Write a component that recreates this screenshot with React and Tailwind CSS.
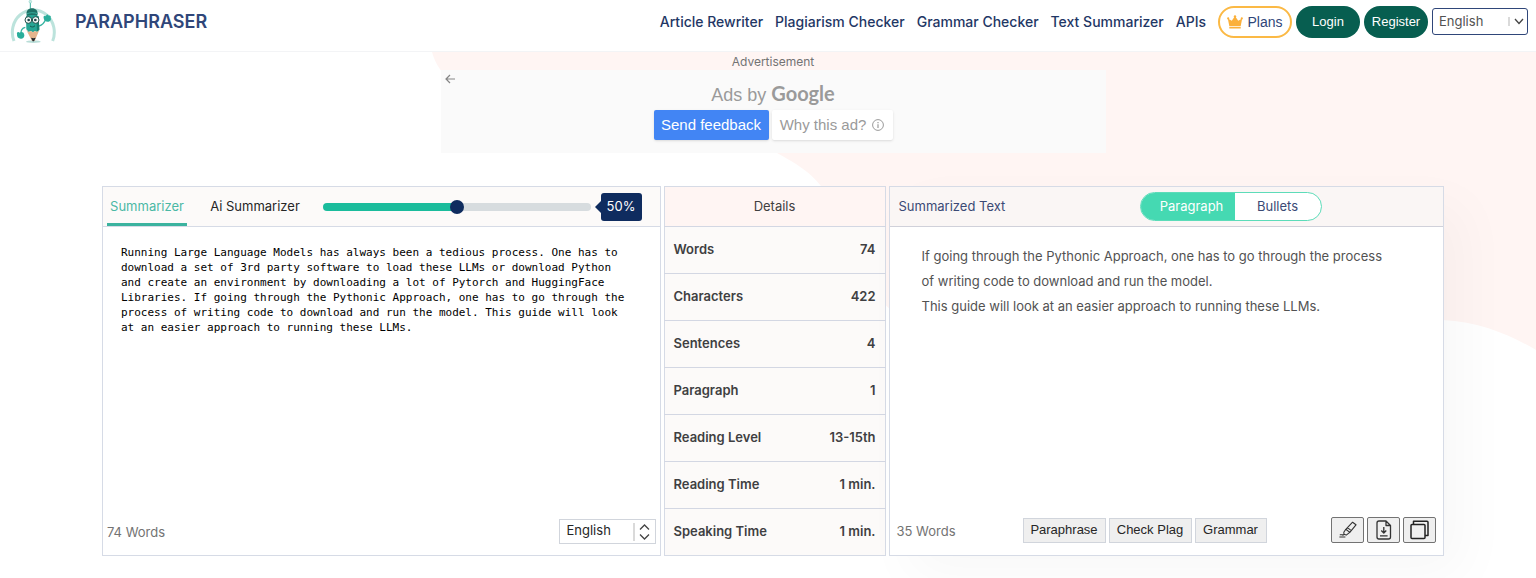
import React, { useState } from 'react';

const NAV_LINKS = ['Article Rewriter', 'Plagiarism Checker', 'Grammar Checker', 'Text Summarizer', 'APIs'];

const DETAILS = [
  { label: 'Words', value: '74' },
  { label: 'Characters', value: '422' },
  { label: 'Sentences', value: '4' },
  { label: 'Paragraph', value: '1' },
  { label: 'Reading Level', value: '13-15th' },
  { label: 'Reading Time', value: '1 min.' },
  { label: 'Speaking Time', value: '1 min.' },
];

const INPUT_TEXT =
  'Running Large Language Models has always been a tedious process. One has to download a set of 3rd party software to load these LLMs or download Python and create an environment by downloading a lot of Pytorch and HuggingFace Libraries. If going through the Pythonic Approach, one has to go through the process of writing code to download and run the model. This guide will look at an easier approach to running these LLMs.';

const SUMMARY = [
  'If going through the Pythonic Approach, one has to go through the process of writing code to download and run the model.',
  'This guide will look at an easier approach to running these LLMs.',
];

const Mascot = () => (
  <svg width="47" height="45" viewBox="30 3 141 135" fill="none" aria-hidden="true">
    <path d="M42 129C32 104 37 70 60 51c24-20 57-20 80 0 23 19 28 53 18 78" stroke="#bce3dc" strokeWidth="9" />
    <ellipse cx="100" cy="131" rx="22" ry="4" fill="#b9ddd7" />
    <path d="M91 12v20" stroke="#3fb5a4" strokeWidth="3" />
    <circle cx="91" cy="11" r="4" fill="#d3efea" stroke="#7accbf" strokeWidth="1.5" />
    <path d="M76 88c-10 2-14 9-13 20M117 84c10-2 16-9 20-20" stroke="#36b3a1" strokeWidth="4" />
    <path d="M51 108c-2-6 5-8 8-4 4-4 13-2 13 4 3 6-1 14-8 14-8 1-14-5-13-14z" fill="#2aae9b" />
    <path d="M131 60c-2-6 4-9 7-5 0-6 7-7 8-2 5-2 8 3 6 6 3 6-2 12-9 12-6 0-12-4-12-11z" fill="#2aae9b" />
    <path d="M80 49c-2-10 5-18 16-18s18 7 17 17l-3 10H80z" fill="#1f7166" />
    <path d="M80 48c8-5 23-5 33-1" stroke="#39ae9d" strokeWidth="3" />
    <path d="M78 55c10-5 29-5 38 0l2 40-7 7-6-3-6 4-7-4-6 3-7-8z" fill="#26a594" />
    <path d="M109 54l7 2 2 40-7 5z" fill="#178071" />
    <path d="M79 96l7 7 6-4 7 4 6-4 6 3 7-6-14 33h-8z" fill="#e5b48d" />
    <path d="M93 119l7 2 7-2-5 11h-4z" fill="#24292f" />
    <circle cx="85" cy="66" r="10" fill="#f4faf8" stroke="#28534f" strokeWidth="3" />
    <circle cx="107" cy="66" r="10" fill="#f4faf8" stroke="#28534f" strokeWidth="3" />
    <circle cx="86" cy="66" r="4" fill="#20464a" />
    <circle cx="106" cy="66" r="4" fill="#20464a" />
    <path d="M90 84c5 4 11 4 15-1" stroke="#13564d" strokeWidth="3" />
  </svg>
);

const CrownIcon = () => (
  <svg width="16" height="14" viewBox="0 0 16 14" fill="#fbb03b" aria-hidden="true">
    <circle cx="8" cy="1.4" r="1.2" />
    <circle cx="1.2" cy="3.4" r="1.1" />
    <circle cx="14.8" cy="3.4" r="1.1" />
    <path d="M.8 3.500l4 2.300L8 1l3.200 4.800 4-2.300-1.500 7.400H2.300zM2.300 11.800h11.400v1.700H2.300z" />
  </svg>
);

const HighlighterIcon = () => (
  <svg width="18" height="18" viewBox="0 0 18 18" fill="none" stroke="#333" strokeWidth="1.1" strokeLinejoin="round" aria-hidden="true">
    <path d="M13.6 1.2l3.4 2.6-6.2 7.6-4-3.1zM6.8 8.3l-2 3 .2 2 2.2.8 3.6-2.7M8.4 6.6l3.9 3M4.9 13.3l-1.4 1.2M.8 13.8h4.4M.4 16h6" />
  </svg>
);

const DownloadIcon = () => (
  <svg width="16" height="20" viewBox="0 0 16 20" fill="none" stroke="#333" strokeWidth="1.3" strokeLinejoin="round" aria-hidden="true">
    <path d="M10 1H3a2 2 0 0 0-2 2v14a2 2 0 0 0 2 2h9.500a2 2 0 0 0 2-2V5.500zM10 1v4.500h4.500M7.800 7v6M5.300 10.500l2.500 2.500 2.500-2.500M4 15.800h7.600" />
  </svg>
);

const CopyIcon = () => (
  <svg width="19" height="20" viewBox="0 0 19 20" fill="none" stroke="#222" strokeWidth="1.5" strokeLinejoin="round" aria-hidden="true">
    <rect x="1" y="4.500" width="14" height="14" rx="1" />
    <path d="M3.500 4.300V1.200H17a1 1 0 0 1 1 1v13.300h-3" />
  </svg>
);

const Backdrop = () => (
  <svg className="absolute top-0 right-0 -z-10" width="1104" height="300" viewBox="0 0 1104 300" aria-hidden="true">
    <path
      d="M0 0C8 30 40 52 120 62C210 72 290 74 345 101C375 117 390 130 398 150C420 190 430 260 500 280C620 300 850 262 1010 268C1050 270 1080 284 1104 298V0Z"
      fill="#fff5f3"
    />
  </svg>
);

const Header = () => (
  <header className="flex h-[52px] items-center justify-between border-b border-gray-100 bg-white pr-2 pb-2 pl-[10px]">
    <a href="#" className="flex items-center gap-[18px] text-lg font-semibold text-[#2f4679]">
      <Mascot />
      PARAPHRASER
    </a>
    <div className="flex items-center gap-3">
      <nav className="flex items-center gap-3 text-sm font-medium text-[#1f3765]">
        {NAV_LINKS.map((link) => (
          <a key={link} href="#" className="whitespace-nowrap">{link}</a>
        ))}
      </nav>
      <div className="flex items-center gap-1 font-['Liberation_Sans',sans-serif] text-[13px]">
        <button className="flex h-8 w-[74px] items-center justify-center gap-1 rounded-full border-2 border-[#fbb945] text-sm text-[#2f4679]">
          <CrownIcon />
          Plans
        </button>
        <button className="h-8 w-16 rounded-full bg-[#075e50] text-white">Login</button>
        <button className="h-8 w-16 rounded-full bg-[#075e50] text-white">Register</button>
        <div className="relative">
          <select
            aria-label="Site language"
            className="h-[27px] w-24 appearance-none rounded-[3px] border border-[#2f4679] bg-white px-[6px] font-['Inter',sans-serif] text-[13px] text-neutral-600"
          >
            <option>English</option>
          </select>
          <svg className="pointer-events-none absolute top-2 right-1" width="16" height="11" viewBox="0 0 16 11" fill="none" aria-hidden="true">
            <path d="M1 1v9" stroke="#b5b5b5" />
            <path d="M7 3l4 4.500L15 3" stroke="#444" strokeWidth="1.300" />
          </svg>
        </div>
      </div>
    </div>
  </header>
);

const AdSlot = () => (
  <section className="flex flex-col items-center pt-[2px]">
    <p className="h-4 text-xs leading-4 text-neutral-500">Advertisement</p>
    <div className="flex h-[83px] w-full max-w-[665px] items-start bg-[#fafafa] font-['Liberation_Sans',sans-serif] text-[#9a9a9a]">
      <button aria-label="Back" className="w-5 p-1">
        <svg width="10" height="10" viewBox="0 0 10 10" fill="none" stroke="#858585" strokeWidth="1.200" aria-hidden="true">
          <path d="M10 5H1M5 1L1 5l4 4" />
        </svg>
      </button>
      <div className="flex flex-1 flex-col items-center gap-[3px] pt-[11px] pr-5">
        <p className="text-lg leading-6">
          Ads by <span className="font-['Lato',sans-serif] text-xl leading-6 font-bold">Google</span>
        </p>
        <div className="flex gap-[3px] text-[15px]">
          <button className="h-[30px] w-[115px] rounded-[2px] bg-[#4285f4] text-white shadow">Send feedback</button>
          <button className="flex h-[30px] w-[121px] items-center justify-center gap-[6px] rounded-[2px] bg-white shadow">
            Why this ad?
            <svg width="12" height="12" viewBox="0 0 12 12" fill="none" stroke="#9a9a9a" aria-hidden="true">
              <circle cx="6" cy="6" r="5.400" />
              <path d="M6 5.200V9M6 3v1.200" strokeWidth="1.200" />
            </svg>
          </button>
        </div>
      </div>
    </div>
  </section>
);

const InputPanel = () => {
  const [text, setText] = useState(INPUT_TEXT);
  const [length, setLength] = useState(50);

  return (
    <section className="flex min-w-0 flex-col border border-[#d6dbe6] bg-white">
      <div className="flex h-10 items-stretch border-b border-[#d6dbe6] bg-[#fcfaf9] pr-[18px] pl-1 text-[13px]">
        <button className="w-20 border-y-3 border-t-transparent border-b-[#3bb39f] text-[#4bb8a5]">Summarizer</button>
        <button className="ml-5 w-24 text-neutral-800">Ai Summarizer</button>
        <div className="ml-5 flex flex-1 items-center">
          <input
            type="range"
            aria-label="Summary length"
            min="0"
            max="100"
            value={length}
            onChange={(e) => setLength(Number(e.target.value))}
            className="h-2 min-w-0 flex-1 appearance-none rounded-full [&::-webkit-slider-thumb]:h-[14px] [&::-webkit-slider-thumb]:w-[14px] [&::-webkit-slider-thumb]:appearance-none [&::-webkit-slider-thumb]:rounded-full [&::-webkit-slider-thumb]:bg-[#0f2c5f]"
            style={{ background: `linear-gradient(to right, #1abc9c ${length}%, #d7dcdf ${length}%)` }}
          />
          <svg className="ml-1" width="6" height="12" viewBox="0 0 6 12" fill="#0f2c5f" aria-hidden="true">
            <path d="M6 0v12L0 6z" />
          </svg>
          <output className="flex h-7 w-[41px] items-center justify-center rounded-[3px] bg-[#0f2c5f] text-[13px] text-white">{length}%</output>
        </div>
      </div>
      <textarea
        aria-label="Text to summarize"
        value={text}
        onChange={(e) => setText(e.target.value)}
        className="flex-1 resize-none bg-transparent pt-[18px] pr-[30px] pl-[18px] font-['DejaVu_Sans_Mono',monospace] text-[11px] leading-[15px] text-black outline-none"
      />
      <div className="flex h-12 items-center justify-between px-1 text-[13px]">
        <span className="pt-1 text-neutral-500">74 Words</span>
        <div className="relative">
          <select
            aria-label="Text language"
            className="h-[25px] w-[97px] appearance-none border border-gray-300 bg-white px-[7px] text-[13px] text-neutral-800"
          >
            <option>English</option>
          </select>
          <svg className="pointer-events-none absolute top-1 right-1" width="19" height="18" viewBox="0 0 19 18" fill="none" aria-hidden="true">
            <path d="M1 0v18" stroke="#b5b5b5" />
            <path d="M7 6.500L11.500 2 16 6.500M7 11.500l4.500 4.500 4.500-4.500" stroke="#444" strokeWidth="1.300" />
          </svg>
        </div>
      </div>
    </section>
  );
};

const DetailsTable = () => (
  <table className="w-full border-collapse border border-[#d6dbe6] bg-[#fcfaf9] text-[13px]">
    <thead>
      <tr className="h-10 bg-[#fff5f3] text-neutral-700">
        <th colSpan="2" className="font-normal">Details</th>
      </tr>
    </thead>
    <tbody className="font-semibold text-[#3f3f42]">
      {DETAILS.map(({ label, value }) => (
        <tr key={label} className="h-[47px] border-t border-[#d3d7e3]">
          <th scope="row" className="pl-[9px] text-left font-semibold">{label}</th>
          <td className="pr-[9px] text-right">{value}</td>
        </tr>
      ))}
    </tbody>
  </table>
);

const OutputPanel = () => {
  const [mode, setMode] = useState('Paragraph');

  return (
    <section className="flex min-w-0 flex-col border border-[#d6dbe6] bg-white shadow-[20px_20px_50px_rgba(0,0,0,0.03)]">
      <div className="flex h-10 items-center border-b border-[#d0d1da] bg-[#faf6f5] px-[9px] text-[13px] text-[#3b4a75]">
        <h2 className="w-[241px]">Summarized Text</h2>
        <div className="flex h-[29px] w-[182px] overflow-hidden rounded-full border border-[#5ddcb9] bg-white">
          {['Paragraph', 'Bullets'].map((item) => (
            <button
              key={item}
              onClick={() => setMode(item)}
              className={`flex-1 ${mode === item ? 'bg-[#45d9b2] pl-2 text-white' : ''}`}
            >
              {item}
            </button>
          ))}
        </div>
      </div>
      <div className="flex-1 pt-[17px] pr-12 pl-8 text-[13px] leading-[25px] text-neutral-600">
        {SUMMARY.map((line) => (
          <p key={line}>{line}</p>
        ))}
      </div>
      <div className="flex h-[50px] items-center justify-between px-[7px]">
        <span className="w-[126px] pt-1 text-[13px] text-neutral-500">35 Words</span>
        <div className="flex flex-1 gap-[3px] font-['Liberation_Sans',sans-serif] text-[13px] text-neutral-800">
          <button className="h-[25px] w-[83px] border border-gray-300 bg-[#efefef]">Paraphrase</button>
          <button className="h-[25px] w-[83px] border border-gray-300 bg-[#efefef]">Check Plag</button>
          <button className="h-[25px] w-[72px] border border-gray-300 bg-[#efefef]">Grammar</button>
        </div>
        <div className="flex gap-[3px]">
          <button aria-label="Highlight" className="flex h-[26px] w-[33px] items-center justify-center rounded-[2px] border border-neutral-500 bg-[#efefef]">
            <HighlighterIcon />
          </button>
          <button aria-label="Download" className="flex h-[26px] w-[33px] items-center justify-center rounded-[2px] border border-neutral-500 bg-[#efefef]">
            <DownloadIcon />
          </button>
          <button aria-label="Copy" className="flex h-[26px] w-[33px] items-center justify-center rounded-[2px] border border-neutral-500 bg-[#efefef]">
            <CopyIcon />
          </button>
        </div>
      </div>
    </section>
  );
};

const App = () => (
  <div className="min-h-screen overflow-hidden bg-white font-['Inter',sans-serif]">
    <Header />
    <main className="relative isolate pr-[92px] pb-6 pl-[102px]">
      <Backdrop />
      <AdSlot />
      <div className="mt-[33px] grid grid-cols-[558fr_222px_555fr] gap-[3px]">
        <InputPanel />
        <DetailsTable />
        <OutputPanel />
      </div>
    </main>
  </div>
);

export default App;
